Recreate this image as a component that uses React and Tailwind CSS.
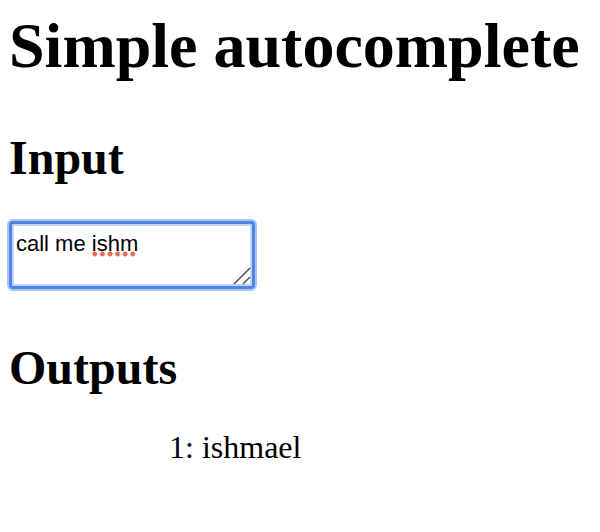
/**
 * App: simple autocomplete demo page.
 * Heading, a focused input box with the typed text, and the list of outputs.
 */
export default function App() {
  const inputText = 'call me ';
  const misspelled = 'ishm';
  const outputs = ['ishmael'];

  return (
    <div className="min-h-[532px] w-[600px] bg-white pl-[9px] text-black font-['Liberation_Serif',serif]">
      <div className="pt-[9px]">
        <h1 className="h-[74px] text-[64px] leading-[74px] font-bold whitespace-nowrap">
          Simple autocomplete
        </h1>

        <h2 className="mt-[47px] h-[55px] text-[48px] leading-[55px] font-bold">Input</h2>

        {/* Focused input box */}
        <div
          role="textbox"
          className="relative mt-[36px] h-[68px] w-[246px] rounded-[4px] border-[3px] border-[#4f84e4] bg-white px-[4px] pt-[7px] shadow-[0_0_0_2px_#aac6f5,inset_0_0_0_2px_#c3d6f7] font-['Liberation_Sans',Arial,sans-serif] text-[22px] leading-[25px]"
        >
          <span>{inputText}</span>
          <span className="relative">
            {misspelled}
            <span className="absolute left-[-1px] top-[20px] h-[6px] w-[46px] bg-[radial-gradient(circle,#ea6a5a_2.2px,transparent_2.8px)] bg-[length:7.6px_6px] bg-repeat-x" />
          </span>

          {/* Resize grip */}
          <svg
            className="absolute right-[1px] bottom-[1px]"
            width="19"
            height="19"
            viewBox="0 0 19 19"
          >
            <line x1="2" y1="18" x2="18" y2="2" stroke="#555" strokeWidth="1.6" />
            <line x1="11" y1="18" x2="18" y2="11" stroke="#555" strokeWidth="1.6" />
          </svg>
        </div>

        <h2 className="mt-[51px] h-[55px] text-[48px] leading-[55px] font-bold">Outputs</h2>

        <div className="mt-[34px] pl-[160px]">
          {outputs.map((word, i) => (
            <div key={word} className="h-[37px] text-[32px] leading-[37px]">
              {i + 1}: {word}
            </div>
          ))}
        </div>
      </div>
    </div>
  );
}
